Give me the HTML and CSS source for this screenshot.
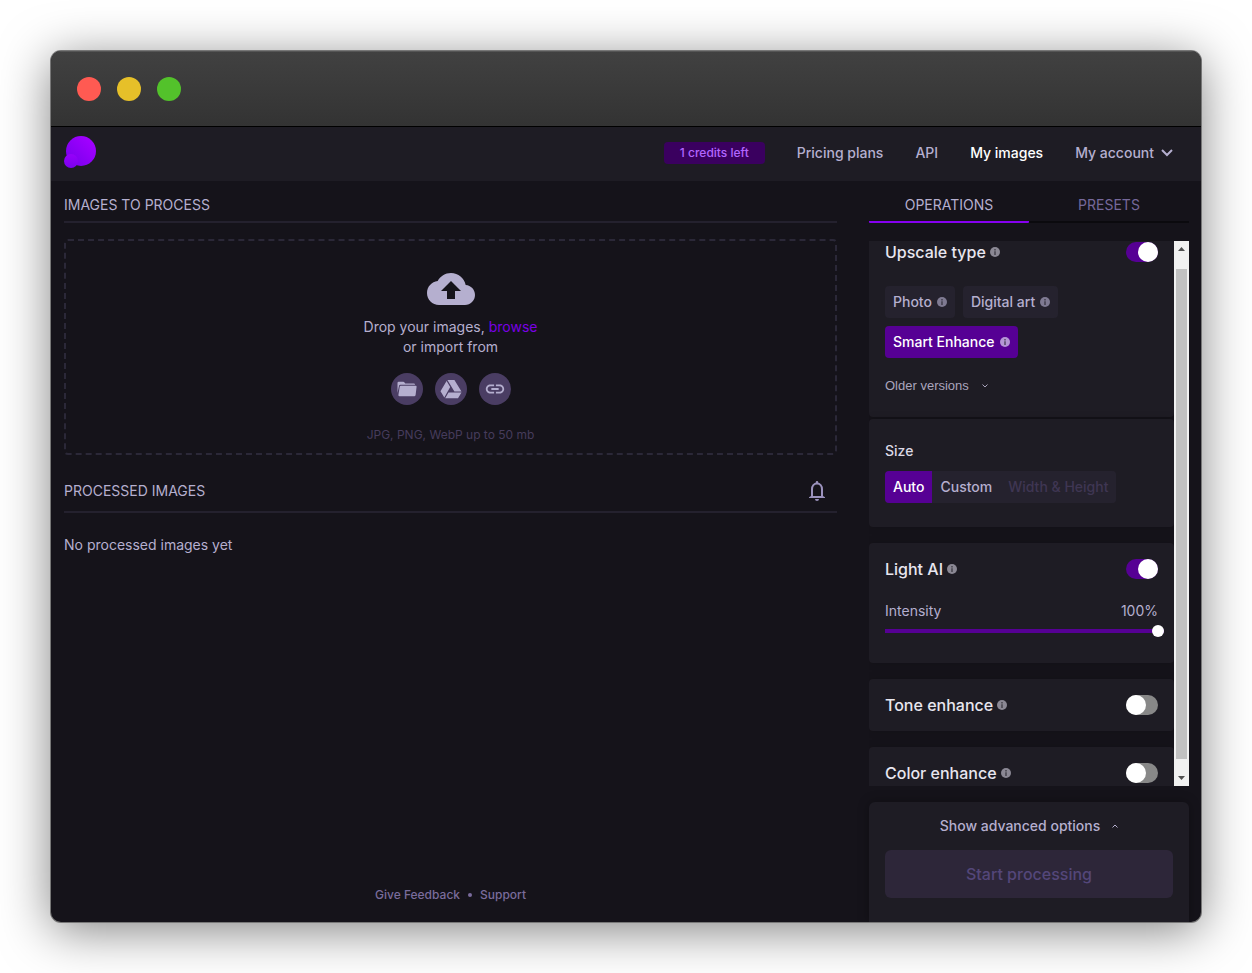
FILE: index.html
```
<!DOCTYPE html>
<html lang="en">
<head>
    <meta charset="utf-8">
    <title>My images</title>
    <link rel="stylesheet" href="styles.css">
</head>
<body>
    <svg class="sprite" aria-hidden="true">
        <symbol id="info" viewBox="0 0 10 10">
            <circle cx="5" cy="5" r="5" fill="currentColor"/>
            <path d="M4.2 2h1.600v1.500H4.200zM4.200 4.300h1.600V8H4.200z" fill="#1e1c24" fill-opacity=".6"/>
        </symbol>
        <symbol id="chevron" viewBox="0 0 12 8">
            <path d="M1 1l5 5 5-5" fill="none" stroke="currentColor" stroke-width="2"/>
        </symbol>
    </svg>

    <div class="window">
        <div class="titlebar">
            <span class="dot red"></span>
            <span class="dot yellow"></span>
            <span class="dot green"></span>
        </div>

        <header class="header">
            <a href="#" class="logo" aria-label="Home">
                <svg width="32" height="32" viewBox="0 0 32 32">
                    <defs>
                        <linearGradient id="big" x1="1" y1="0" x2="0" y2="1">
                            <stop offset="0.2" stop-color="#a000ff"/>
                            <stop offset="1" stop-color="#7300ea"/>
                        </linearGradient>
                        <linearGradient id="small" x1="0.5" y1="0" x2="0.5" y2="1">
                            <stop offset="0" stop-color="#9700fa"/>
                            <stop offset="1" stop-color="#7a00ef"/>
                        </linearGradient>
                    </defs>
                    <circle cx="17" cy="15" r="15" fill="url(#big)"/>
                    <circle cx="7" cy="25" r="7" fill="url(#small)"/>
                </svg>
            </a>
            <nav class="nav">
                <a href="#" class="credits">1 credits left</a>
                <a href="#">Pricing plans</a>
                <a href="#">API</a>
                <a href="#" class="active">My images</a>
                <button type="button" class="account">My account
                    <svg width="12" height="8"><use href="#chevron"/></svg>
                </button>
            </nav>
        </header>

        <main class="main">
            <section class="images">
                <h2 class="section-title">IMAGES TO PROCESS</h2>
                <div class="dropzone">
                    <svg class="cloud" width="48" height="32" viewBox="0 4 24 16">
                        <path d="M19.35 10.04C18.67 6.59 15.64 4 12 4 9.11 4 6.6 5.64 5.35 8.04 2.34 8.36 0 10.91 0 14c0 3.31 2.69 6 6 6h13c2.76 0 5-2.24 5-5 0-2.64-2.05-4.78-4.65-4.96zM14 13v4h-4v-4H7l5-5 5 5h-3z" fill="currentColor"/>
                    </svg>
                    <p>Drop your images, <a href="#">browse</a><br>or import from</p>
                    <div class="sources">
                        <button type="button" aria-label="Folder">
                            <svg width="20" height="16" viewBox="0 0 20 16">
                                <path d="M.5 12V2Q.5.8 1.7.8h4.600Q7 .8 7.500 1.500l.8 1h8.500q1.200 0 1.200 1v.3H3.400Q2.300 3.800 2 5z" fill="currentColor"/>
                                <path d="M3.900 4.700h14.800q1 0 .9 1l-1 8.300q-.2 1.300-1.500 1.300H2.600q-1.300 0-1.200-1.300L2.700 5.700q.1-1 1.200-1z" fill="currentColor"/>
                            </svg>
                        </button>
                        <button type="button" aria-label="Google Drive">
                            <svg width="22" height="20" viewBox="0 0 22 20">
                                <path d="M7.400 1h7L21.500 12.500h-7.100zM6.600 2.100l3.600 6L4.300 18.600.5 12.300zM8.500 13.400H21.500L18 19.200H5.200z" fill="currentColor"/>
                            </svg>
                        </button>
                        <button type="button" aria-label="Link">
                            <svg width="22" height="22" viewBox="0 0 24 24">
                                <path d="M3.900 12c0-1.710 1.390-3.100 3.100-3.100h4V7H7c-2.760 0-5 2.240-5 5s2.240 5 5 5h4v-1.900H7c-1.710 0-3.100-1.390-3.100-3.100zM8 13h8v-2H8v2zm9-6h-4v1.900h4c1.710 0 3.100 1.390 3.100 3.100s-1.390 3.100-3.100 3.100h-4V17h4c2.760 0 5-2.240 5-5s-2.240-5-5-5z" fill="currentColor"/>
                            </svg>
                        </button>
                    </div>
                    <small>JPG, PNG, WebP up to 50 mb</small>
                </div>

                <div class="section-title processed">
                    <h2>PROCESSED IMAGES</h2>
                    <button type="button" class="bell" aria-label="Notifications">
                        <svg width="16" height="20" viewBox="0 0 16 20">
                            <path d="M3 15.500V8.200C3 5 5 2.500 8 2.500s5 2.500 5 5.700v7.300" fill="none" stroke="currentColor" stroke-width="2"/>
                            <path d="M6.700 3V1.400a1.300 1.300 0 0 1 2.600 0V3zM2 15h12l2 1.300V17H0v-.7zM6 18h4a2 2 0 0 1-4 0z" fill="currentColor"/>
                        </svg>
                    </button>
                </div>
                <p class="empty">No processed images yet</p>

                <footer class="footer">
                    <a href="#">Give Feedback</a><span class="separator"></span><a href="#">Support</a>
                </footer>
            </section>

            <aside class="sidebar">
                <div class="tabs">
                    <button type="button" class="tab selected">OPERATIONS</button>
                    <button type="button" class="tab">PRESETS</button>
                </div>

                <div class="scroller">
                    <div class="cards">
                        <div class="card upscale">
                            <div class="card-head">
                                <label for="upscale">Upscale type</label>
                                <svg class="info" width="10" height="10"><use href="#info"/></svg>
                                <input type="checkbox" id="upscale" class="toggle" checked>
                            </div>
                            <div class="chips">
                                <label class="chip"><input type="radio" name="type">Photo <svg width="10" height="10"><use href="#info"/></svg></label>
                                <label class="chip"><input type="radio" name="type">Digital art <svg width="10" height="10"><use href="#info"/></svg></label>
                                <label class="chip"><input type="radio" name="type" checked>Smart Enhance <svg width="10" height="10"><use href="#info"/></svg></label>
                            </div>
                            <button type="button" class="older">Older versions
                                <svg width="6" height="4"><use href="#chevron"/></svg>
                            </button>
                        </div>

                        <div class="card size">
                            <h3>Size</h3>
                            <div class="segments">
                                <label class="segment"><input type="radio" name="size" checked>Auto</label>
                                <label class="segment"><input type="radio" name="size">Custom</label>
                                <label class="segment"><input type="radio" name="size" disabled>Width &amp; Height</label>
                            </div>
                        </div>

                        <div class="card light">
                            <div class="card-head">
                                <label for="light">Light AI</label>
                                <svg class="info" width="10" height="10"><use href="#info"/></svg>
                                <input type="checkbox" id="light" class="toggle" checked>
                            </div>
                            <div class="intensity">
                                <label for="intensity">Intensity</label>
                                <output for="intensity">100%</output>
                            </div>
                            <input type="range" id="intensity" class="slider" min="0" max="100" value="100">
                        </div>

                        <div class="card">
                            <div class="card-head">
                                <label for="tone">Tone enhance</label>
                                <svg class="info" width="10" height="10"><use href="#info"/></svg>
                                <input type="checkbox" id="tone" class="toggle">
                            </div>
                        </div>

                        <div class="card">
                            <div class="card-head">
                                <label for="color">Color enhance</label>
                                <svg class="info" width="10" height="10"><use href="#info"/></svg>
                                <input type="checkbox" id="color" class="toggle">
                            </div>
                        </div>
                    </div>
                    <div class="scrollbar" aria-hidden="true">
                        <svg width="7" height="4" viewBox="0 0 7 4"><path d="M0 4l3.500-4L7 4z" fill="#505050"/></svg>
                        <div class="thumb"></div>
                        <svg width="7" height="4" viewBox="0 0 7 4"><path d="M0 0l3.500 4L7 0z" fill="#505050"/></svg>
                    </div>
                </div>

                <div class="actions">
                    <button type="button" class="advanced">Show advanced options
                        <svg width="6" height="4"><use href="#chevron"/></svg>
                    </button>
                    <button type="button" class="start" disabled>Start processing</button>
                </div>
            </aside>
        </main>
    </div>
</body>
</html>
```
FILE: styles.css
```
* {
    box-sizing: border-box;
}
body {
    margin: 0;
    padding: 51px;
    height: 100vh;
    background: #fff;
    color: #b5afcf;
    font-family: Inter, sans-serif;
    font-size: 14px;
    line-height: 20px;
}
h2, h3, p {
    margin: 0;
    font-size: 14px;
    font-weight: 400;
}
a {
    color: inherit;
    text-decoration: none;
}
button {
    padding: 0;
    border: none;
    background: none;
    color: inherit;
    font: inherit;
    cursor: pointer;
}
svg {
    flex: none;
}
.sprite {
    display: none;
}

/* Window frame */
.window {
    display: flex;
    flex-direction: column;
    height: 100%;
    border-radius: 10px;
    background: #15131a;
    overflow: hidden;
    box-shadow: 0 0 0 1px #777, 0 8px 50px rgba(0, 0, 0, 0.5);
}
.titlebar {
    display: flex;
    align-items: center;
    gap: 16px;
    height: 76px;
    padding: 0 26px;
    border-bottom: 1px solid #000;
    background: linear-gradient(#414141, #333);
    box-shadow: inset 0 1px #555;
}
.dot {
    width: 24px;
    height: 24px;
    border-radius: 50%;
}
.red {
    background: #ff5a52;
}
.yellow {
    background: #e6c029;
}
.green {
    background: #53c22b;
}

/* Header */
.header {
    display: flex;
    justify-content: space-between;
    align-items: center;
    height: 54px;
    padding: 0 28px 2px 13px;
    background: #1e1c24;
}
.logo {
    height: 34px;
}
.nav {
    display: flex;
    align-items: center;
    gap: 32px;
    font-weight: 500;
}
.credits {
    padding: 1px 16px;
    border-radius: 4px;
    background: #3a005f;
    color: #b266ff;
    font-size: 12px;
}
.nav .active {
    color: #fff;
}
.account {
    display: flex;
    align-items: center;
    gap: 7px;
}

.main {
    display: flex;
    flex: 1;
    gap: 32px;
    min-height: 0;
    padding: 0 12px 0 13px;
}

/* Left column */
.images {
    display: flex;
    flex: 1;
    flex-direction: column;
}
.section-title {
    padding: 14px 0 6px;
    border-bottom: 2px solid #24212e;
}
.dropzone {
    display: flex;
    flex-direction: column;
    align-items: center;
    margin-top: 16px;
    padding: 32px 16px 8px;
    border: 2px dashed #2b2838;
    border-radius: 4px;
    text-align: center;
}
.dropzone p {
    margin-top: 12px;
}
.dropzone a {
    color: #7a00e6;
}
.sources {
    display: flex;
    gap: 12px;
    margin-top: 16px;
}
.sources button {
    display: flex;
    align-items: center;
    justify-content: center;
    width: 32px;
    height: 32px;
    border-radius: 50%;
    background: #4a3d63;
}
.dropzone small {
    margin-top: 20px;
    color: #463c5c;
    font-size: 12px;
}
.processed {
    display: flex;
    justify-content: space-between;
    align-items: center;
    padding: 26px 12px 10px 0;
}
.bell {
    height: 20px;
    color: #9b92bd;
}
.bell svg {
    display: block;
}
.empty {
    margin-top: 22px;
}
.footer {
    display: flex;
    align-items: center;
    justify-content: center;
    gap: 8px;
    margin-top: auto;
    padding-bottom: 17px;
    color: #7a6c9c;
    font-size: 12px;
    font-weight: 500;
}
.separator {
    width: 4px;
    height: 4px;
    border-radius: 50%;
    background: currentColor;
}

/* Sidebar */
.sidebar {
    display: flex;
    flex-direction: column;
    width: 320px;
}
.tabs {
    display: flex;
}
.tab {
    flex: 1;
    padding: 14px 0 6px;
    border-bottom: 2px solid #0b0a0e;
    color: #75689a;
}
.selected {
    border-color: #8600f0;
    border-radius: 1px;
    color: #b5afcf;
}
.scroller {
    display: flex;
    flex: 1;
    min-height: 0;
    margin-top: 18px;
}
.cards {
    flex: 1;
    overflow: hidden;
}
.card {
    margin-bottom: 16px;
    padding: 16px;
    border-radius: 4px;
    background: #1e1c24;
    box-shadow: 0 0 8px rgba(0, 0, 0, 0.15);
}
.card-head {
    display: flex;
    align-items: center;
    gap: 4px;
    color: #e8e6ef;
    font-size: 16px;
    font-weight: 500;
}
.info {
    color: #8b8894;
}
.toggle {
    appearance: none;
    width: 32px;
    height: 20px;
    margin: 0 0 0 auto;
    border-radius: 10px;
    background: #888;
}
.toggle::before {
    content: "";
    display: block;
    width: 20px;
    height: 20px;
    border-radius: 50%;
    background: #fff;
}
.toggle:checked {
    background: #560094;
}
.toggle:checked::before {
    margin-left: 12px;
}
.upscale {
    margin-bottom: 2px;
    padding: 1px 16px 21px;
    border-radius: 0 0 4px 4px;
}
.chips {
    display: flex;
    flex-wrap: wrap;
    gap: 8px;
    margin-top: 24px;
}
.chip, .segment {
    display: flex;
    align-items: center;
    gap: 5px;
    height: 32px;
    padding: 0 8px;
    border-radius: 4px;
    background: #25222e;
    font-weight: 500;
}
.chip input, .segment input {
    appearance: none;
    width: 0;
    height: 0;
    margin: 0 -5px 0 0;
}
.chip svg {
    color: #7f7a92;
}
.chip:has(:checked), .segment:has(:checked) {
    background: #560094;
    color: #fff;
}
.chip:has(:checked) svg {
    color: #b596d6;
}
.older {
    display: flex;
    align-items: center;
    gap: 13px;
    margin-top: 18px;
    color: #aaa5bd;
    font-family: "Liberation Sans", sans-serif;
    font-size: 13px;
}
.size {
    padding: 22px 16px 24px;
}
.size h3 {
    margin-bottom: 10px;
    color: #dcd9e6;
    font-weight: 500;
}
.segments {
    display: flex;
    width: fit-content;
    border-radius: 4px;
    background: #25222e;
    overflow: hidden;
}
.segment {
    border-radius: 0;
}
.segment:has(:disabled) {
    color: #3f3653;
}
.light {
    padding-bottom: 26px;
}
.intensity {
    display: flex;
    justify-content: space-between;
    margin-top: 22px;
}
.slider {
    appearance: none;
    display: block;
    width: calc(100% + 6px);
    height: 12px;
    margin: 4px 0 0;
    background: linear-gradient(#560094, #560094) center / 100% 4px no-repeat;
}
.slider::-webkit-slider-thumb {
    appearance: none;
    width: 12px;
    height: 12px;
    border-radius: 50%;
    background: #fff;
}
.scrollbar {
    display: flex;
    flex-direction: column;
    align-items: center;
    width: 15px;
    padding: 6px 0;
    background: #f1f1f1;
}
.thumb {
    flex: 1;
    width: 11px;
    margin: 18px 0 17px;
    background: #c1c1c1;
}
.actions {
    display: flex;
    flex-direction: column;
    gap: 14px;
    margin-top: 16px;
    padding: 14px 16px 24px;
    border-radius: 6px 6px 0 0;
    background: #1e1c24;
    box-shadow: 0 0 12px rgba(0, 0, 0, 0.3);
}
.advanced {
    display: flex;
    align-items: center;
    justify-content: center;
    gap: 12px;
    font-weight: 500;
}
.advanced svg {
    transform: rotate(180deg);
}
.start {
    height: 48px;
    border-radius: 6px;
    background: #2d2639;
    color: #54477a;
    font-size: 16px;
    font-weight: 500;
}
```
